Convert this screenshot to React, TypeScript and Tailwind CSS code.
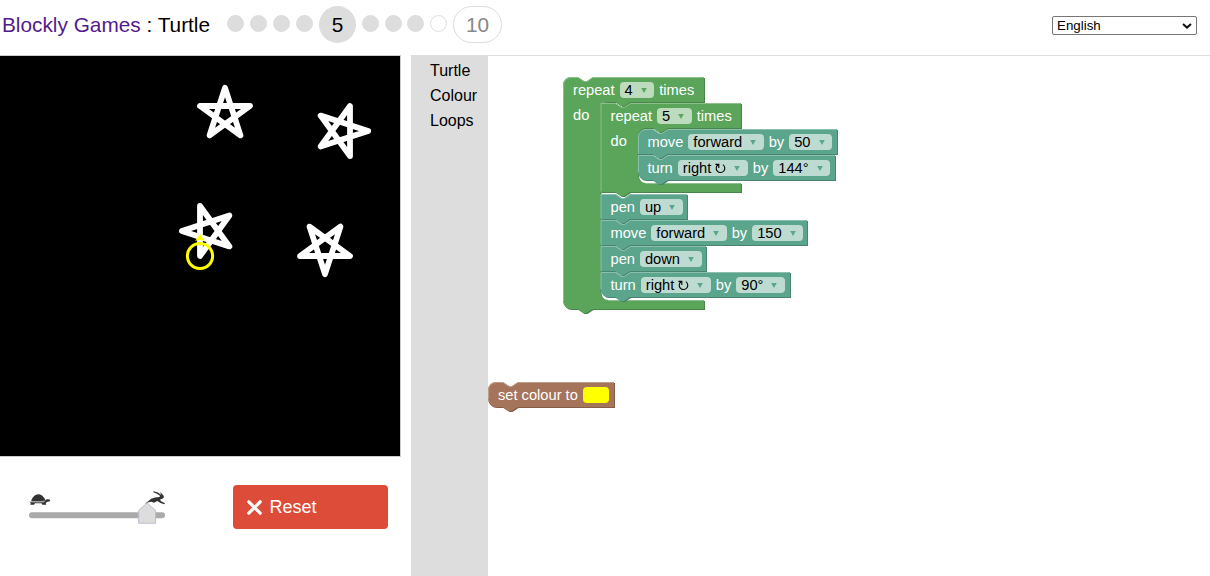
import React from "react";

type Tone = { fill: string; dark: string; light: string; arrow: string };

const GREEN: Tone = { fill: "#5ba55b", dark: "#498449", light: "#8cc08c", arrow: "text-[#5ba55b]" };
const TEAL: Tone = { fill: "#5ba58c", dark: "#498470", light: "#8cc0ae", arrow: "text-[#5ba58c]" };
const BROWN: Tone = { fill: "#a5745b", dark: "#845d49", light: "#c09e8c", arrow: "text-[#a5745b]" };

const NOTCH = "l 6,4 3,0 6,-4";
const NOTCH_BACK = "l -6,4 -3,0 -6,-4";

type ShapeProps = { x: number; y: number; w: number; tone: Tone; round?: boolean; roundBottom?: boolean; inner?: number };

function Shape({ x, y, w, tone, round, roundBottom, inner }: ShapeProps) {
  const start = round ? "m 0,8 A 8,8 0 0,1 8,0 H 15" : "m 0,0 H 15";
  const end = roundBottom ? "H 8 a 8,8 0 0,1 -8,-8 z" : "H 0 z";
  const middle = inner
    ? `v 25 H 67.5 ${NOTCH_BACK} h -7 a 8,8 0 0,0 -8,8 v ${inner - 16} a 8,8 0 0,0 8,8 H ${w} v 9`
    : "v 25";
  const body = `${start} ${NOTCH} H ${w} ${middle} H 29.5 ${NOTCH_BACK} ${end}`;
  const bottom = inner ? 25 + inner + 9 : 25;
  const top = round ? "m 0.5,7.5 A 7.5,7.5 0 0,1 8,0.5 H 15" : "m 0.5,0.5 H 15";
  const left = `M 0.5,${round ? 7.5 : 0.5} V ${roundBottom ? bottom - 8 : bottom - 0.5}`;
  const lip = inner ? `M 45,${25 + inner + 0.5} H ${w - 0.5}` : "";
  return (
    <g transform={`translate(${x},${y})`}>
      <path d={body} fill={tone.dark} transform="translate(1,1)" />
      <path d={body} fill={tone.fill} />
      <path d={`${top} ${NOTCH} H ${w - 0.5} ${left} ${lip}`} fill="none" stroke={tone.light} strokeWidth="1" />
    </g>
  );
}

function Drop({ children, tone, turn }: { children: React.ReactNode; tone: Tone; turn?: boolean }) {
  return (
    <span className="flex h-4 items-center rounded bg-white/60 pl-[5px] pr-[7.5px] text-black">
      {children}
      {turn && (
        <svg className="ml-1 h-[11px] w-[11px]" viewBox="0 0 11 11" fill="none" stroke="currentColor" strokeWidth="1.1">
          <path d="M7.8 1.6A4.3 4.3 0 1 1 3 1.7M3.8 5V1.4H0.4" />
        </svg>
      )}
      <svg className={`ml-[8px] h-[5px] w-[6px] ${tone.arrow}`} viewBox="0 0 6 5">
        <path d="M0.2 0H5.8L3 5Z" fill="currentColor" />
      </svg>
    </span>
  );
}

function Fields({ at, children }: { at: string; children: React.ReactNode }) {
  return (
    <div className={`absolute flex h-4 items-center gap-[5px] whitespace-nowrap text-[14.667px] leading-4 text-white ${at}`}>
      {children}
    </div>
  );
}

function Workspace() {
  return (
    <main className="relative flex-1 overflow-hidden border-t border-[#ddd]">
      <svg className="absolute left-0 top-[-1px] h-[521px] w-[722px]" viewBox="488 55 722 521">
        <Shape x={563} y={77} w={141} tone={GREEN} round roundBottom inner={198} />
        <Shape x={600.5} y={103} w={140.5} tone={GREEN} inner={55} />
        <Shape x={638} y={129} w={199} tone={TEAL} round />
        <Shape x={638} y={155} w={197} tone={TEAL} roundBottom />
        <Shape x={600.5} y={194} w={86.5} tone={TEAL} />
        <Shape x={600.5} y={220} w={206.5} tone={TEAL} />
        <Shape x={600.5} y={246} w={105.5} tone={TEAL} />
        <Shape x={600.5} y={272} w={189.5} tone={TEAL} roundBottom />
        <Shape x={488} y={382} w={126} tone={BROWN} round roundBottom />
      </svg>
      <Fields at="left-[85px] top-[26px]">
        <span>repeat</span><Drop tone={GREEN}>4</Drop><span>times</span>
      </Fields>
      <Fields at="left-[85px] top-[51px]"><span>do</span></Fields>
      <Fields at="left-[122.5px] top-[52px]">
        <span>repeat</span><Drop tone={GREEN}>5</Drop><span>times</span>
      </Fields>
      <Fields at="left-[122.5px] top-[77px]"><span>do</span></Fields>
      <Fields at="left-[159.5px] top-[78px]">
        <span>move</span><Drop tone={TEAL}>forward</Drop><span>by</span><Drop tone={TEAL}>50</Drop>
      </Fields>
      <Fields at="left-[159.5px] top-[104px]">
        <span>turn</span><Drop tone={TEAL} turn>right</Drop><span>by</span><Drop tone={TEAL}>144°</Drop>
      </Fields>
      <Fields at="left-[122.5px] top-[143px]">
        <span>pen</span><Drop tone={TEAL}>up</Drop>
      </Fields>
      <Fields at="left-[122.5px] top-[169px]">
        <span>move</span><Drop tone={TEAL}>forward</Drop><span>by</span><Drop tone={TEAL}>150</Drop>
      </Fields>
      <Fields at="left-[122.5px] top-[195px]">
        <span>pen</span><Drop tone={TEAL}>down</Drop>
      </Fields>
      <Fields at="left-[122.5px] top-[221px]">
        <span>turn</span><Drop tone={TEAL} turn>right</Drop><span>by</span><Drop tone={TEAL}>90°</Drop>
      </Fields>
      <Fields at="left-[10px] top-[331px]">
        <span>set colour to</span><span className="h-4 w-[26px] rounded bg-[#ff0]" />
      </Fields>
    </main>
  );
}

const STAR = "M0 0V-50L29.39 -9.55L-18.16 -25L29.39 -40.45Z";

function Drawing() {
  return (
    <svg className="h-[402px] w-[401px] border-y border-r border-[#ccc] bg-black" viewBox="0 0 400 400">
      <g fill="none" stroke="#fff" strokeWidth="5.8" strokeLinecap="round" strokeLinejoin="round">
        <path d={STAR} transform="translate(200,200)" />
        <path d={STAR} transform="translate(200,50) rotate(90)" />
        <path d={STAR} transform="translate(350,50) rotate(180)" />
        <path d={STAR} transform="translate(350,200) rotate(270)" />
      </g>
      <circle cx="200" cy="200" r="12.6" fill="none" stroke="#ff0" strokeWidth="3" />
      <path d="M200 177.5Q201.5 181 205 185Q200 183 195 185Q198.5 181 200 177.5Z" fill="#ff0" />
    </svg>
  );
}

function SpeedSlider() {
  return (
    <svg className="h-[36px] w-[140px]" viewBox="27 490 140 36">
      <path d="M32 515.2H162" stroke="#aaa" strokeWidth="6" strokeLinecap="round" />
      <g fill="#333">
        <path d="M31 501.2Q32.5 496.5 36 494.7Q39 493.6 42 495.5Q44.5 497.5 45.5 500.5L44.5 501.6H32Z" />
        <path d="M29.3 501.2L31.5 502.3H44L46 499.6Q49.3 498.9 50.3 500.3Q50 501.8 47.5 501.8L45.7 503L46.3 504.8H42.3L41.5 503.3H35L34 504.8H30.2L30.8 503Z" />
        <path d="M144.5 504L148.5 501Q150.5 498 155 497.4L159.3 497L160.2 496Q157.5 493.5 153.2 492.2L153.6 491.2Q158.5 492 161.3 495Q159.8 492.5 160.6 492.3L163.4 495.6Q164.6 497.8 162.3 498.8L160 499.4L161 501.2L165 503.2L164.3 504.3L160.5 502.9L157.3 500.9L154 502.8L151.5 501.8L148.5 502.2Z" />
      </g>
      <path d="M32.5 501.3Q38 502.6 45 500.9" stroke="#aaa" strokeWidth="0.7" fill="none" />
      <path d="M138.7 523.2V510.5L147.1 503L155.6 510.5V523.2Z" fill="#ddd" stroke="#bbbbcc" strokeWidth="1" />
    </svg>
  );
}

function Dot({ empty, tight }: { empty?: boolean; tight?: boolean }) {
  return (
    <span
      className={`h-[17px] w-[17px] rounded-full border border-[#ddd] ${empty ? "bg-white" : "bg-[#ddd]"} ${tight ? "-ml-px" : ""}`}
    />
  );
}

export default function App() {
  return (
    <div className="flex h-[576px] w-full flex-col overflow-hidden bg-white font-['Liberation_Sans',Arial,sans-serif] text-black">
      <header className="flex h-[55px] items-start pl-[2px] pr-[13px]">
        <h1 className="mt-[13px] w-[225px] whitespace-nowrap text-[20.8px] leading-6">
          <a className="text-[#551a8b]">Blockly Games</a> : Turtle
        </h1>
        <div className="mt-[6px] flex h-[37px] items-center gap-[6px] text-[20.8px]">
          <div className="mb-[2px] flex gap-[6px]"><Dot /><Dot /><Dot /><Dot /></div>
          <span className="flex h-[37px] w-[37px] items-center justify-center rounded-full bg-[#ddd]">5</span>
          <div className="mb-[2px] flex gap-[6px]"><Dot /><Dot /><Dot tight /><Dot empty /></div>
          <span className="flex h-[37px] w-[49px] items-center justify-center rounded-full border border-[#ddd] text-[#888]">10</span>
        </div>
        <div className="ml-auto mt-4 flex h-[19px] w-[145px] items-center justify-between rounded-[2px] border border-[#767676] pl-1 pr-1 text-[13.333px] leading-[15px]">
          <span>English</span>
          <svg className="h-[6px] w-[10px]" viewBox="0 0 10 6" fill="none" stroke="#111" strokeWidth="2">
            <path d="M1 0.9L5 4.6L9 0.9" />
          </svg>
        </div>
      </header>
      <div className="flex min-h-0 flex-1">
        <section className="flex w-[411px] flex-col">
          <Drawing />
          <div className="flex items-start pl-[27px] pt-7">
            <div className="mt-[5px]"><SpeedSlider /></div>
            <button className="ml-[66px] flex h-11 w-[155px] items-center rounded bg-[#dd4b39] pl-[14px] text-lg text-white">
              <svg className="mr-[7.5px] h-[15px] w-[15px]" viewBox="0 0 15 15" stroke="#fff" strokeWidth="3.2" strokeLinecap="round">
                <path d="M1.8 1.8L13.2 13.2M13.2 1.8L1.8 13.2" />
              </svg>
              Reset
            </button>
          </div>
        </section>
        <nav className="w-[77px] bg-[#ddd] pl-[19px] pt-[3px] text-base leading-[25px]">
          <div>Turtle</div>
          <div>Colour</div>
          <div>Loops</div>
        </nav>
        <Workspace />
      </div>
    </div>
  );
}
